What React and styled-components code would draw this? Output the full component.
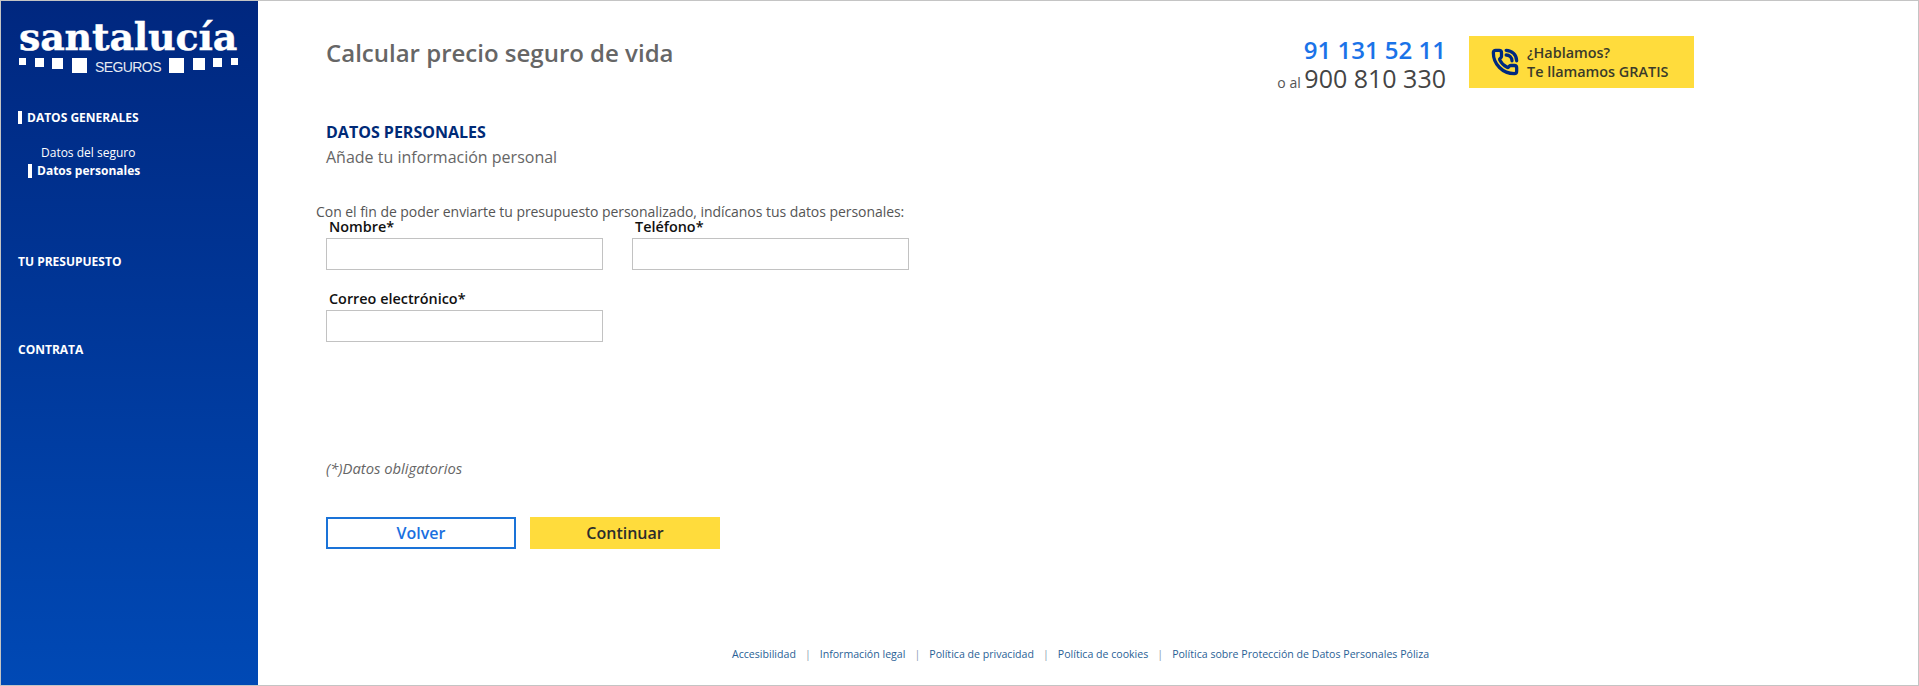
import React from 'react';
import styled, { createGlobalStyle } from 'styled-components';
import { PhoneCall } from 'lucide-react';

const GlobalStyle = createGlobalStyle`
  html, body { margin: 0; padding: 0; background: #fff; }
  body { font-family: "Open Sans", "Noto Sans", sans-serif; }
  * { box-sizing: border-box; }
`;

const Frame = styled.div`
  display: flex;
  width: 1919px;
  height: 686px;
  border: 1px solid #c4c4c4;
  overflow: hidden;
`;

const Sidebar = styled.aside`
  flex: 0 0 257px;
  padding: 18px 0 0 17px;
  background: linear-gradient(180deg, #00277f 0%, #0049b5 100%);
  color: #fff;
`;

const Logo = styled.div`
  width: 219px;
  margin: 0 0 37px 1px;
`;

const LogoWord = styled.div`
  font-family: "DejaVu Serif", serif;
  font-weight: 700;
  font-size: 38px;
  line-height: 36px;
  letter-spacing: -0.2px;
  height: 36px;
  white-space: nowrap;
  -webkit-text-stroke: 0.4px #fff;
`;

const LogoBand = styled.div`
  display: flex;
  align-items: flex-start;
  justify-content: space-between;
  margin-top: 3px;
  height: 16px;
`;

const Square = styled.span`
  display: block;
  width: ${(p) => p.$size}px;
  height: ${(p) => p.$size}px;
  background: #fff;
`;

const LogoSeguros = styled.span`
  font-family: "Liberation Sans", sans-serif;
  font-size: 14px;
  letter-spacing: -0.6px;
  line-height: 16px;
  margin-top: 1px;
  opacity: 0.9;
`;

const NavTitle = styled.div`
  font-size: 12px;
  font-weight: 700;
  line-height: 16px;
  margin-top: ${(p) => p.$top || 0}px;
  ${(p) => p.$active && 'padding-left: 5px; border-left: 4px solid #fff; height: 13px; line-height: 13px;'}
`;

const NavItem = styled.div`
  font-size: 12px;
  line-height: 16px;
  margin-left: ${(p) => (p.$active ? 10 : 23)}px;
  margin-top: ${(p) => p.$top || 0}px;
  ${(p) => p.$active && 'font-weight: 700; padding-left: 5px; border-left: 4px solid #fff; height: 14px; line-height: 14px;'}
`;

const Main = styled.main`
  flex: 1;
  display: flex;
  flex-direction: column;
  padding: 34px 224px 0 68px;
`;

const Header = styled.header`
  display: flex;
  align-items: flex-start;
  justify-content: space-between;
`;

const Title = styled.h1`
  margin: 3px 0 0;
  font-size: 24px;
  font-weight: 600;
  line-height: 30px;
  color: #666;
`;

const Contact = styled.div`
  display: flex;
  gap: 23px;
`;

const Phones = styled.div`
  text-align: right;
`;

const PhoneBlue = styled.div`
  font-size: 24px;
  font-weight: 550;
  line-height: 29px;
  color: #1a73e8;
`;

const PhoneDark = styled.div`
  font-size: 25px;
  font-weight: 500;
  line-height: 29px;
  color: #444;
  small { font-size: 14px; font-weight: 400; color: #555; }
`;

const CallButton = styled.div`
  display: flex;
  align-items: center;
  gap: 8px;
  width: 225px;
  height: 52px;
  margin-top: 1px;
  padding-left: 22px;
  background: #ffdc3c;
  color: #3a3a2a;
  font-size: 14.4px;
  font-weight: 600;
  line-height: 19px;
  svg { color: #00297f; flex: none; }
`;

const SectionTitle = styled.h2`
  margin: 24px 0 0;
  font-size: 16px;
  font-weight: 700;
  line-height: 22px;
  color: #002a77;
`;

const Subtitle = styled.p`
  margin: 3px 0 0;
  font-size: 16px;
  line-height: 22px;
  color: #666;
`;

const Intro = styled.p`
  margin: 36px 0 0 -10px;
  font-size: 14px;
  letter-spacing: -0.05px;
  line-height: 16px;
  color: #555;
  white-space: nowrap;
`;

const Fields = styled.div`
  display: grid;
  grid-template-columns: 277px 277px;
  column-gap: 29px;
  row-gap: 22px;
  width: 583px;
`;

const Label = styled.label`
  display: block;
  padding-left: 3px;
  font-size: 14.4px;
  font-weight: 600;
  line-height: 14px;
  color: #111;
`;

const Input = styled.input`
  display: block;
  width: 100%;
  height: 32px;
  margin-top: 4px;
  border: 1px solid #c2c2c2;
  background: #fff;
`;

const Note = styled.p`
  margin: 116px 0 0;
  font-size: 14.8px;
  font-style: italic;
  line-height: 20px;
  color: #666;
`;

const Actions = styled.div`
  display: flex;
  gap: 14px;
  margin-top: 39px;
`;

const Button = styled.button`
  width: 190px;
  height: 32px;
  padding: 0;
  font-family: inherit;
  font-size: 16px;
  font-weight: 600;
  border: ${(p) => (p.$primary ? 'none' : '2px solid #1a73d8')};
  background: ${(p) => (p.$primary ? '#ffdc3c' : '#fff')};
  color: ${(p) => (p.$primary ? '#2c2c2c' : '#1a6fe0')};
`;

const Footer = styled.footer`
  display: flex;
  align-items: center;
  margin: auto 0 24px 406px;
  font-size: 10.6px;
  line-height: 14px;
  color: #2a5f96;
  white-space: nowrap;
`;

const FooterLink = styled.span`
  & + &::before {
    content: '|';
    margin: 0 9px;
    color: #8a9bb0;
  }
`;

const squaresLeft = [7, 9, 11, 15];
const squaresRight = [15, 12, 9, 7];
const footerLinks = [
  'Accesibilidad',
  'Información legal',
  'Política de privacidad',
  'Política de cookies',
  'Política sobre Protección de Datos Personales Póliza',
];

export default function App() {
  return (
    <>
      <GlobalStyle />
      <Frame>
        <Sidebar>
          <Logo>
            <LogoWord>santalucía</LogoWord>
            <LogoBand>
              {squaresLeft.map((size, i) => (
                <Square key={i} $size={size} />
              ))}
              <LogoSeguros>SEGUROS</LogoSeguros>
              {squaresRight.map((size, i) => (
                <Square key={i} $size={size} />
              ))}
            </LogoBand>
          </Logo>
          <NavTitle $active>DATOS GENERALES</NavTitle>
          <NavItem $top={21}>Datos del seguro</NavItem>
          <NavItem $active $top={3}>Datos personales</NavItem>
          <NavTitle $top={76}>TU PRESUPUESTO</NavTitle>
          <NavTitle $top={72}>CONTRATA</NavTitle>
        </Sidebar>
        <Main>
          <Header>
            <Title>Calcular precio seguro de vida</Title>
            <Contact>
              <Phones>
                <PhoneBlue>91 131 52 11</PhoneBlue>
                <PhoneDark><small>o al </small>900 810 330</PhoneDark>
              </Phones>
              <CallButton>
                <PhoneCall size={28} strokeWidth={2.8} />
                <span>¿Hablamos?<br />Te llamamos GRATIS</span>
              </CallButton>
            </Contact>
          </Header>
          <SectionTitle>DATOS PERSONALES</SectionTitle>
          <Subtitle>Añade tu información personal</Subtitle>
          <Intro>Con el fin de poder enviarte tu presupuesto personalizado, indícanos tus datos personales:</Intro>
          <Fields>
            <div>
              <Label>Nombre*</Label>
              <Input />
            </div>
            <div>
              <Label>Teléfono*</Label>
              <Input />
            </div>
            <div>
              <Label>Correo electrónico*</Label>
              <Input />
            </div>
          </Fields>
          <Note>(*)Datos obligatorios</Note>
          <Actions>
            <Button>Volver</Button>
            <Button $primary>Continuar</Button>
          </Actions>
          <Footer>
            {footerLinks.map((link) => (
              <FooterLink key={link}>{link}</FooterLink>
            ))}
          </Footer>
        </Main>
      </Frame>
    </>
  );
}
